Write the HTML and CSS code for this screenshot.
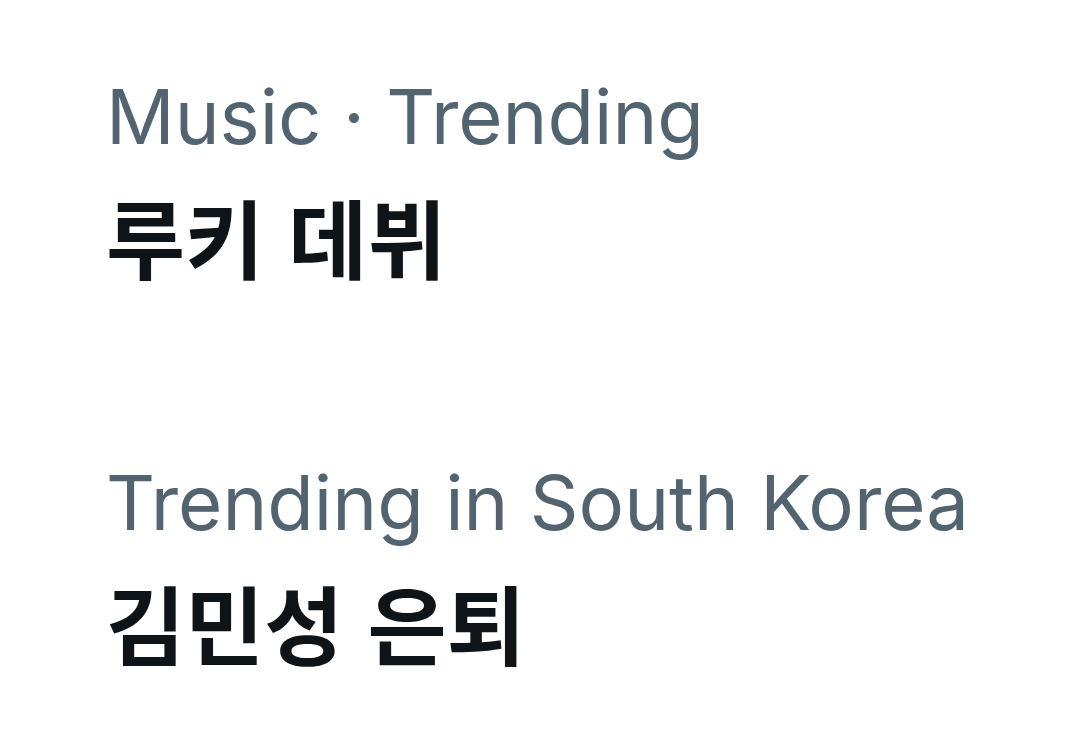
FILE: index.html
```html
<!DOCTYPE html>
<html lang="ko">
<head>
<meta charset="utf-8">
<link rel="stylesheet" href="styles.css">
</head>
<body>
<main class="list">
  <section class="trend">
    <div class="meta">Music · Trending</div>
    <div class="title">루키 데뷔</div>
  </section>
  <section class="trend">
    <div class="meta">Trending in South Korea</div>
    <div class="title">김민성 은퇴</div>
  </section>
</main>
</body>
</html>
```
FILE: styles.css
```css
html, body {
  margin: 0;
  padding: 0;
  background: #ffffff;
  width: 1080px;
  height: 753px;
  overflow: hidden;
}
.list {
  display: flex;
  flex-direction: column;
  gap: 168px;
  padding: 68px 0 0 106px;
}
.trend {
  display: flex;
  flex-direction: column;
}
.meta {
  font-family: Inter, "Noto Sans", sans-serif;
  font-size: 76px;
  line-height: 96px;
  color: #536471;
  font-weight: 400;
}
.title {
  margin-top: 22px;
  font-family: "Noto Sans CJK KR", sans-serif;
  font-size: 86px;
  line-height: 100px;
  color: #0f1419;
  font-weight: 700;
}
```
